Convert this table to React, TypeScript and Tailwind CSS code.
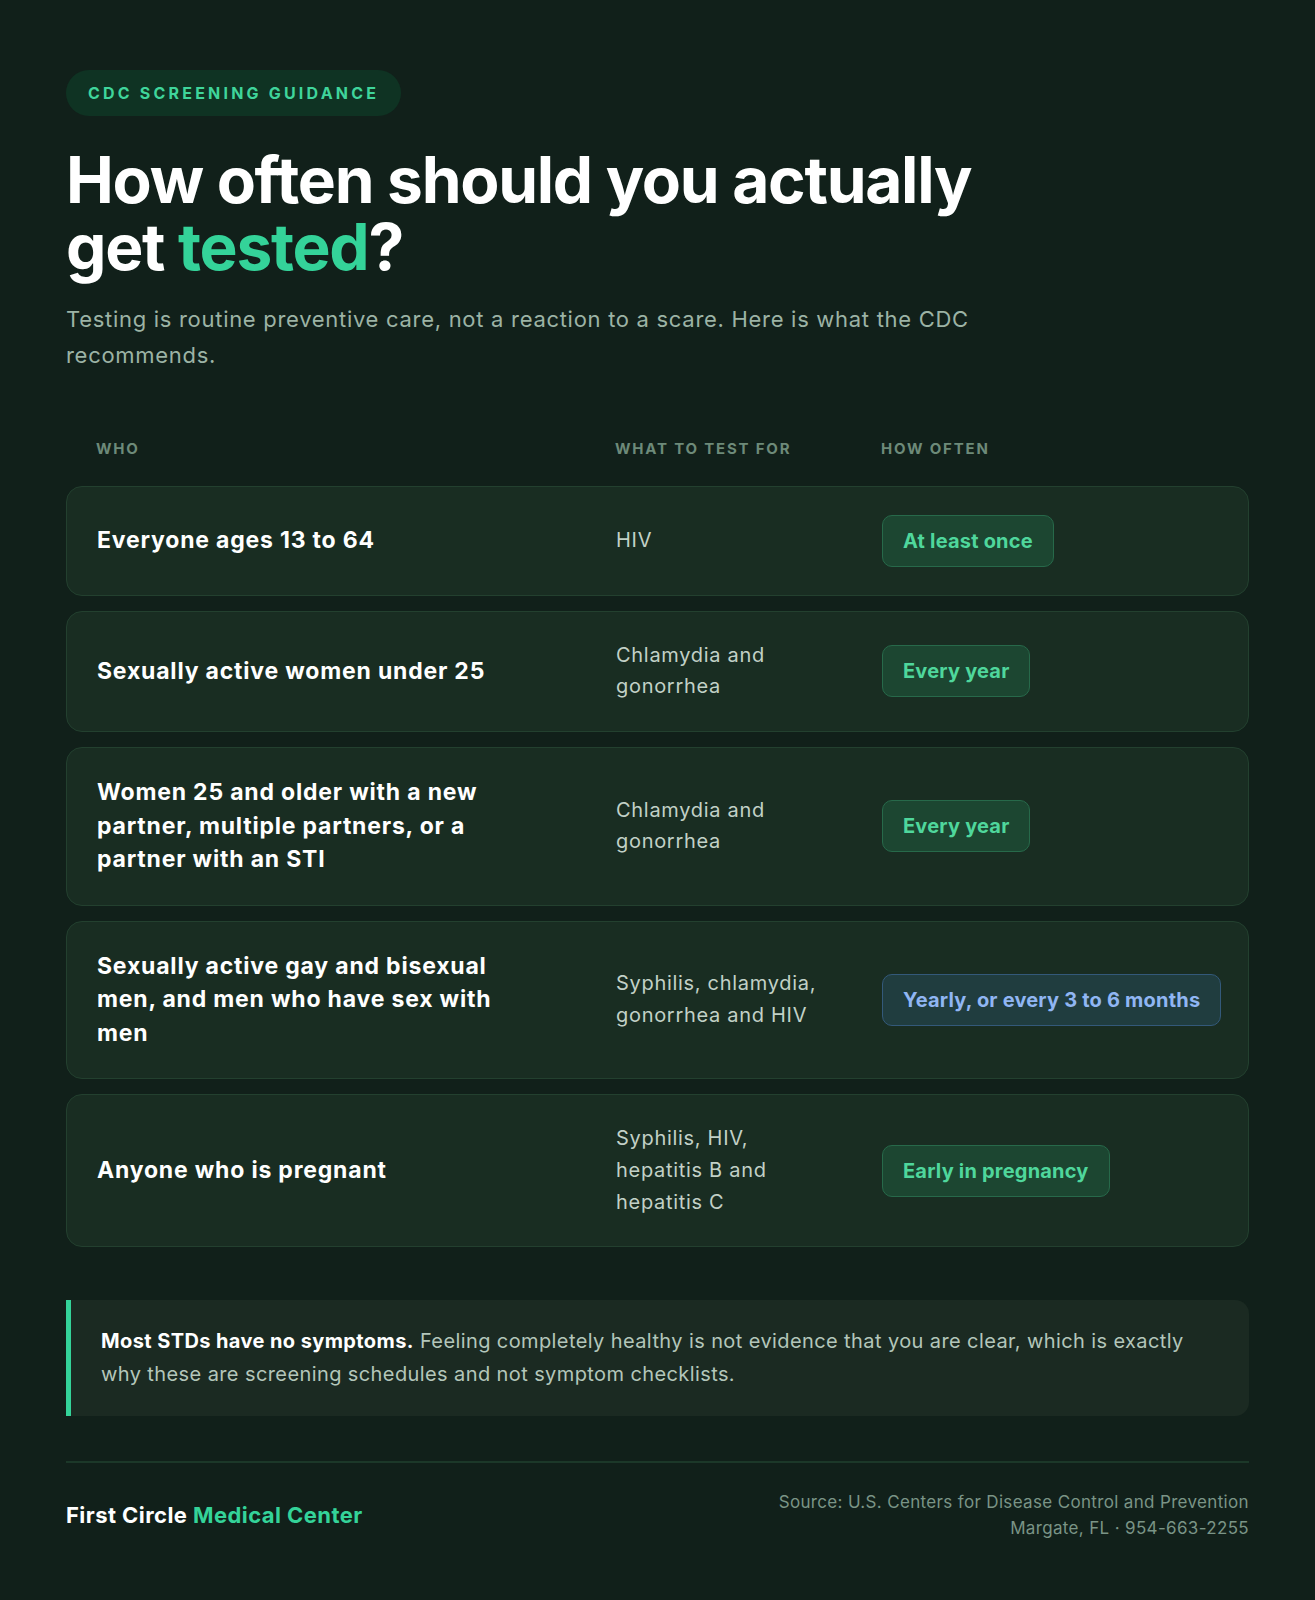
import React from "react";

type Row = {
  who: string;
  what: string;
  how: string;
  tone: "green" | "blue";
};

const rows: Row[] = [
  { who: "Everyone ages 13 to 64", what: "HIV", how: "At least once", tone: "green" },
  { who: "Sexually active women under 25", what: "Chlamydia and gonorrhea", how: "Every year", tone: "green" },
  {
    who: "Women 25 and older with a new partner, multiple partners, or a partner with an STI",
    what: "Chlamydia and gonorrhea",
    how: "Every year",
    tone: "green",
  },
  {
    who: "Sexually active gay and bisexual men, and men who have sex with men",
    what: "Syphilis, chlamydia, gonorrhea and HIV",
    how: "Yearly, or every 3 to 6 months",
    tone: "blue",
  },
  {
    who: "Anyone who is pregnant",
    what: "Syphilis, HIV, hepatitis B and hepatitis C",
    how: "Early in pregnancy",
    tone: "green",
  },
];

function Badge({ label, tone }: { label: string; tone: "green" | "blue" }) {
  const cls =
    tone === "green"
      ? "border-[#27694a] bg-[#1c4631] text-[#4fd79c]"
      : "border-[#33597a] bg-[#203d3f] text-[#90b6f3]";
  return (
    <span
      className={`inline-flex h-[52px] items-center whitespace-nowrap rounded-[10px] border px-[20px] text-[20px] font-bold tracking-[0.01em] ${cls}`}
    >
      {label}
    </span>
  );
}

export default function App() {
  return (
    <div className="min-h-[1600px] bg-[#11201a] px-[66px] pt-[70px] pb-[60px] font-['Inter',sans-serif] antialiased">
      <div className="inline-flex h-[46px] items-center rounded-full bg-[#0f3323] px-[22px] text-[16px] font-bold tracking-[0.2em] text-[#3fd59b]">
        CDC SCREENING GUIDANCE
      </div>

      <h1 className="mt-[30px] max-w-[1000px] text-[64px] font-bold leading-[1.05] tracking-[-0.02em] text-white">
        How often should you actually get <span className="text-[#34d399]">tested</span>?
      </h1>

      <p className="mt-[22px] max-w-[960px] text-[22px] leading-[1.6] tracking-[0.032em] text-[#9cb3a5]">
        Testing is routine preventive care, not a reaction to a scare. Here is what the CDC recommends.
      </p>

      <div className="mt-[66px] grid grid-cols-[462px_209px_1fr] gap-x-[57px] px-[30px] text-[15px] font-bold leading-[20px] tracking-[0.12em] text-[#6d8a79]">
        <div>WHO</div>
        <div>WHAT TO TEST FOR</div>
        <div>HOW OFTEN</div>
      </div>

      <div className="mt-[27px] flex flex-col gap-[15px]">
        {rows.map((r, i) => (
          <div
            key={i}
            className="grid grid-cols-[462px_209px_1fr] items-center gap-x-[57px] rounded-[16px] border border-[#23402f] bg-[#192d22] px-[30px] py-[28px]"
          >
            <div className="pr-[28px] text-[23px] font-bold leading-[1.46] tracking-[0.035em] text-white">
              {r.who}
            </div>
            <div className="text-[20px] leading-[1.58] tracking-[0.035em] text-[#c2d1c7]">{r.what}</div>
            <div>
              <Badge label={r.how} tone={r.tone} />
            </div>
          </div>
        ))}
      </div>

      <div className="mt-[53px] rounded-r-[14px] border-l-[5px] border-[#34d399] bg-[#1b2a22] py-[25px] pl-[30px] pr-[40px] text-[20px] leading-[1.65] tracking-[0.02em] text-[#b3c6ba]">
        <span className="font-bold text-white">Most STDs have no symptoms.</span> Feeling completely healthy is not
        evidence that you are clear, which is exactly why these are screening schedules and not symptom checklists.
      </div>

      <div className="mt-[45px] border-t-2 border-[#1c3829] pt-[26px]">
        <div className="flex items-center justify-between">
          <div className="text-[22px] font-bold tracking-[0.02em] text-white">
            First Circle <span className="text-[#34d399]">Medical Center</span>
          </div>
          <div className="text-right text-[17px] leading-[26px] tracking-[0.02em] text-[#7a9486]">
            <div>Source: U.S. Centers for Disease Control and Prevention</div>
            <div>Margate, FL · 954-663-2255</div>
          </div>
        </div>
      </div>
    </div>
  );
}
